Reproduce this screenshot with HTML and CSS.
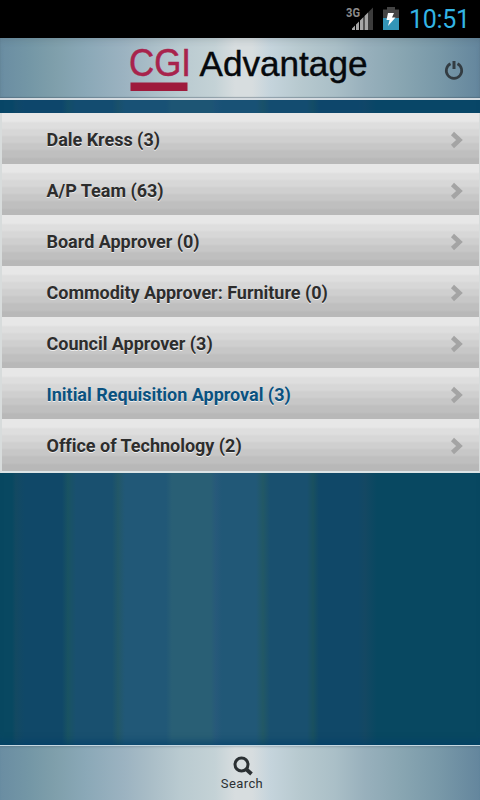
FILE: index.html
```html
<!DOCTYPE html>
<html lang="en">
<head>
    <meta charset="UTF-8">
    <meta name="viewport" content="width=device-width, initial-scale=1.0">
    <title>CGI Advantage</title>
    <link rel="stylesheet" href="styles.css">
</head>
<body>
    <div class="status-bar">
        <svg class="signal" width="30" height="30" viewBox="0 0 30 30">
            <text class="network" x="0" y="12" textLength="14" lengthAdjust="spacingAndGlyphs">3G</text>
            <path fill="#3c3c3c" d="M22 7.500L27 2.500V25H22z"/>
            <path fill="#a6a6a6" d="M6 25v-1.500L9 20.500V25zM10 25v-5.500L13 16.500V25zM14 25v-9.500L17.500 12V25zM18.500 25V11L22 7.500V25z"/>
        </svg>
        <svg class="battery" width="16" height="24" viewBox="0 0 16 24">
            <path fill="#444" d="M4 1h8v2.500h4V12H0V3.500h4z"/>
            <path fill="#3395b8" d="M0 12h16v12H0z"/>
            <path fill="#fff" d="M5 7h6L9 11.500h3.500L5 20l1.500-6H3.500z"/>
        </svg>
        <span class="clock">10:51</span>
    </div>
    <div class="header">
        <svg class="logo" width="244" height="52" viewBox="0 0 244 52">
            <text class="cgi" x="1" y="34" textLength="62" lengthAdjust="spacingAndGlyphs">CGI</text>
            <rect x="2.500" y="40.500" width="57" height="8.500" fill="#9e1a3c"/>
            <text class="advantage" x="71.500" y="33.500" textLength="168" lengthAdjust="spacingAndGlyphs">Advantage</text>
        </svg>
        <a href="#" class="power">
            <svg width="20" height="20" viewBox="0 0 20 20" fill="none" stroke="#333c42">
                <path stroke-width="2.700" d="M6.500 3.800A7.700 7.700 0 1 0 13.500 3.800"/>
                <path stroke-width="3" d="M10 1v8"/>
            </svg>
        </a>
    </div>
    <div class="content">
        <ul class="list">
            <li><a href="#">Dale Kress (3)</a><svg class="arrow" viewBox="0 0 14 18"><path d="M2.500 2.500L9.500 9L2.500 15.500"/></svg></li>
            <li><a href="#">A/P Team (63)</a><svg class="arrow" viewBox="0 0 14 18"><path d="M2.500 2.500L9.500 9L2.500 15.500"/></svg></li>
            <li><a href="#">Board Approver (0)</a><svg class="arrow" viewBox="0 0 14 18"><path d="M2.500 2.500L9.500 9L2.500 15.500"/></svg></li>
            <li><a href="#">Commodity Approver: Furniture (0)</a><svg class="arrow" viewBox="0 0 14 18"><path d="M2.500 2.500L9.500 9L2.500 15.500"/></svg></li>
            <li><a href="#">Council Approver (3)</a><svg class="arrow" viewBox="0 0 14 18"><path d="M2.500 2.500L9.500 9L2.500 15.500"/></svg></li>
            <li class="active"><a href="#">Initial Requisition Approval (3)</a><svg class="arrow" viewBox="0 0 14 18"><path d="M2.500 2.500L9.500 9L2.500 15.500"/></svg></li>
            <li><a href="#">Office of Technology (2)</a><svg class="arrow" viewBox="0 0 14 18"><path d="M2.500 2.500L9.500 9L2.500 15.500"/></svg></li>
        </ul>
    </div>
    <div class="footer">
        <svg width="20" height="20" viewBox="0 0 20 20" fill="none" stroke="#2b3033">
            <circle cx="8.500" cy="8.500" r="6.500" stroke-width="3"/>
            <path stroke-width="3.800" d="M13 13l5.500 5"/>
        </svg>
        <span>Search</span>
    </div>
</body>
</html>
```

FILE: styles.css
```css
* {
    box-sizing: border-box;
}
body {
    margin: 0;
    width: 480px;
    height: 800px;
    display: flex;
    flex-direction: column;
    overflow: hidden;
    font-family: Roboto, "Liberation Sans", sans-serif;
    background-color: #084861;
}
a {
    color: inherit;
    text-decoration: none;
}

/* status bar */
.status-bar {
    height: 38px;
    flex: none;
    display: flex;
    justify-content: flex-end;
    align-items: flex-start;
    background: #000;
}
.signal {
    margin-top: 5px;
}
.network {
    font: bold 12px Roboto, sans-serif;
    fill: #8c8c8c;
}
.battery {
    margin: 6px 0 0 7px;
}
.clock {
    width: 71px;
    margin-left: 10px;
    padding-top: 5px;
    font-size: 25px;
    font-weight: 400;
    line-height: 30px;
    letter-spacing: -0.3px;
    color: #33b5e5;
}

/* header and footer share the same metal look */
.header, .footer {
    flex: none;
    background: linear-gradient(to right, #6a8da2 0, #7497a6 30px, #7f9fab 55px, #8aa8b7 85px, #9cb3c1 125px, #a9bdc7 150px, #b9cad0 180px, #c4d2d6 215px, #d7dddf 235px, #d7dddf 252px, #c5d4dc 270px, #b7c9cf 300px, #aabfc7 335px, #98b0bc 365px, #89a6b2 400px, #7898a8 440px, #64869d 480px);
}
.header {
    height: 62px;
    padding-left: 128px;
    display: flex;
    border-bottom: 2px solid #d5dbe0;
    box-shadow: inset 0 -1px 1px rgba(60, 80, 95, 0.4), inset 0 5px 7px -3px rgba(60, 75, 85, 0.2);
}
.logo {
    margin-top: 4px;
}
.cgi, .advantage {
    font-family: "Liberation Sans", Arial, sans-serif;
}
.cgi {
    font-size: 38px;
    fill: #a8234c;
    stroke: #a8234c;
    stroke-width: 0.5px;
}
.advantage {
    font-size: 34.5px;
    fill: #06090c;
    stroke: #06090c;
    stroke-width: 0.4px;
}
.power {
    margin: 22px 0 0 72px;
}
.power svg {
    display: block;
}

/* list */
.content {
    flex: 1;
    padding-top: 13px;
    background: linear-gradient(to right, #084861 0 12px, #134962 16px, #104868 25px 62px, #195362 68px, #19506f 76px 112px, #225767 118px, #215877 125px 166px, #295f75 172px 211px, #27597a 216px, #215877 222px 256px, #225865 263px, #19506f 270px 307px, #19505f 313px, #104868 319px 358px, #144863 365px, #084861 377px);
    box-shadow: inset 0 -9px 7px -5px rgba(0, 62, 105, 0.6), inset 0 13px 0 rgba(10, 70, 115, 0.35);
}
.list {
    list-style: none;
    margin: 0;
    background: #dce4e6;
    padding: 0;
}
.list li {
    height: 51px;
    padding: 2px 15px 0 44.5px;
    display: flex;
    align-items: center;
    justify-content: space-between;
    border: 0 solid #d8dcdc;
    border-width: 0 1px 0 2px;
    background: linear-gradient(to bottom, #e7e7e7 0 8px, #dedede 10px 15px, #d7d7d7 17px 22px, #cfcfcf 24px 29px, #c7c7c7 31px 36px, #bfbfbf 38px 44px, #b8b8b8 46px 51px);
    color: #2d2d2d;
    font-size: 18px;
    font-weight: 700;
    line-height: 24px;
    letter-spacing: -0.02px;
    text-shadow: 0 1px 0 #eee;
}
.list li:last-child {
    height: 54px;
    padding-bottom: 1px;
    border-bottom: 2px solid #dce4e6;
}
.list .active {
    color: #0a5280;
}
.arrow {
    width: 14px;
    height: 18px;
    fill: none;
    stroke: #a4a4a4;
    stroke-width: 4.5;
}

/* footer */
.footer {
    height: 55px;
    padding-top: 10px;
    display: flex;
    flex-direction: column;
    align-items: center;
    border-top: 1px solid #c5d8e2;
    box-shadow: inset 0 2px 2px -1px rgba(60, 80, 95, 0.25);
    color: #2b3033;
    font-size: 13px;
    line-height: 15px;
    letter-spacing: 0.4px;
}
.footer svg {
    margin-left: 6px;
}
.footer span {
    margin: 0 0 0 4px;
}
```
